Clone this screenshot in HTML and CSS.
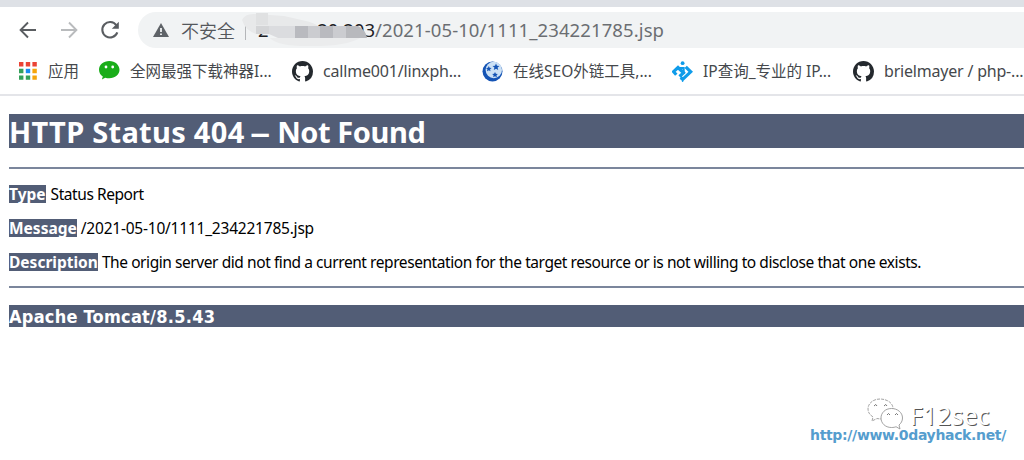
FILE: index.html
```html
<!DOCTYPE html>
<html lang="zh-CN">
<head>
<meta charset="utf-8">
<title>HTTP Status 404 – Not Found</title>
<link rel="stylesheet" href="styles.css">
</head>
<body>
<svg class="defs" width="0" height="0">
  <symbol id="github" viewBox="0 0 16 16"><path fill="#24292e" d="M8 0C3.58 0 0 3.58 0 8c0 3.54 2.29 6.53 5.47 7.59.4.07.55-.17.55-.38 0-.19-.01-.82-.01-1.49-2.01.37-2.53-.49-2.69-.94-.09-.23-.48-.94-.82-1.13-.28-.15-.68-.52-.01-.53.63-.01 1.08.58 1.23.82.72 1.21 1.87.87 2.33.66.07-.52.28-.87.51-1.07-1.78-.2-3.64-.89-3.64-3.95 0-.87.31-1.59.82-2.15-.08-.2-.36-1.02.08-2.12 0 0 .67-.21 2.2.82.64-.18 1.32-.27 2-.27s1.36.09 2 .27c1.53-1.04 2.2-.82 2.2-.82.44 1.1.16 1.92.08 2.12.51.56.82 1.27.82 2.15 0 3.07-1.87 3.75-3.65 3.95.29.25.54.73.54 1.48 0 1.07-.01 1.93-.01 2.2 0 .21.15.46.55.38A8.01 8.01 0 0 0 16 8c0-4.42-3.58-8-8-8z"/></symbol>
</svg>
<div class="tabstrip"></div>
<header class="toolbar">
  <svg class="nav-icon" viewBox="0 0 20 20" fill="none" stroke="#5a5d61" stroke-width="1.9"><path d="M18 10H3M10 2.500 2.600 10l7.400 7.500"/></svg>
  <svg class="nav-icon" viewBox="0 0 20 20" fill="none" stroke="#b9bbbd" stroke-width="1.9"><path d="M2 10h15M10 2.500l7.400 7.500-7.400 7.500"/></svg>
  <svg class="nav-icon" viewBox="0 0 20 20"><path d="M16.300 5.200A7.700 7.700 0 1 0 17.300 12.300" fill="none" stroke="#5a5d61" stroke-width="2.1"/><path d="M18.800 1.800v7h-7z" fill="#5a5d61"/></svg>
  <div class="omnibox">
    <svg class="warn" viewBox="0 0 16 14"><path d="M8 0l8 14H0z" fill="#5f6368"/><path d="M7.100 5h1.800v4H7.100zM7.100 10.400h1.800v1.700H7.100z" fill="#f1f3f4"/></svg>
    <span class="unsafe">不安全</span>
    <span class="divider"></span>
    <span class="host"><span class="host-start">2</span><span class="host-end">20.203</span>
      <svg class="mosaic" width="132" height="42" viewBox="0 0 132 42">
        <path d="M0 8q3-7 14-6l28 2 22 5q8 2 12 5H28v8H14Q3 18 0 8z" fill="#e8e9ea"/>
        <path d="M14 1h12v12H14z" fill="#e0e1e2"/>
        <path d="M14 14h14v8H14z" fill="#d4d5d7"/>
        <path d="M27 14h26v12H36l-9-4z" fill="#dbdcdf"/>
        <path d="M53 14h13v12H53zM78 14h13v12H78z" fill="#b9babf"/>
        <path d="M66 14h12v12H66zM91 14h13v12H91z" fill="#cbccd0"/>
        <path d="M104 14h12q8 4 9 12h-21z" fill="#b8b9bd"/>
        <path d="M28 26h90q-14 8-46 8-36 1-44-8z" fill="#ebeced"/>
      </svg>
    </span>
    <span class="path">/2021-05-10/1111_234221785.jsp</span>
  </div>
</header>
<nav class="bookmarks">
  <a class="bm b1"><svg width="18" height="18" viewBox="0 0 18 18"><path fill="#ea4335" d="M0 0h4.400v4.400H0zM6.800 0h4.400v4.400H6.800zM13.400 0h4.400v4.400h-4.400z"/><path fill="#34a05a" d="M0 6.800h4.400v4.400H0zM0 13.400h4.400v4.400H0zM6.800 13.400h4.400v4.400H6.800z"/><path fill="#1a8cf0" d="M6.800 6.800h4.400v4.400H6.800z"/><path fill="#f5a50b" d="M13.400 6.800h4.400v4.400h-4.400zM13.400 13.400h4.400v4.400h-4.400z"/></svg><span>应用</span></a>
  <a class="bm b2"><svg width="21" height="20" viewBox="0 0 21 20"><path fill="#1aad19" d="M10.300 0C4.400 0 0 3.800 0 8.800c0 2.900 1.500 5.200 3.800 6.800l-.9 3 3.300-1.800c1.300.4 2.600.5 4.100.5 5.800 0 10.200-3.700 10.200-8.500S16.100 0 10.300 0z"/><circle cx="7" cy="6" r="1.400" fill="#fff"/><circle cx="13.700" cy="6" r="1.400" fill="#fff"/></svg><span>全网最强下载神器I...</span></a>
  <a class="bm b3"><svg width="21" height="21"><use href="#github"/></svg><span>callme001/linxph...</span></a>
  <a class="bm b4"><svg width="21" height="21" viewBox="0 0 21 21"><circle cx="10.500" cy="10.500" r="10" fill="#1554b5"/><circle cx="11.800" cy="9" r="8.200" fill="#cce1f5"/><path fill="#1554b5" d="m14 2.500 1 2.200 2.500.2-1.900 1.600.6 2.500-2.200-1.300-2.200 1.300.6-2.500-1.900-1.600 2.500-.2zM6.800 5l.8 1.700 2 .2-1.500 1.400.4 2-1.700-1-1.800 1 .4-2-1.400-1.400 2-.2zM13 11l.9 1.700 2 .2-1.400 1.400.4 2-1.900-1-1.800 1 .4-2-1.500-1.400 2-.2z"/></svg><span>在线SEO外链工具,...</span></a>
  <a class="bm b5"><svg width="21" height="21" viewBox="0 0 21 21" fill="none" stroke="#0f9cea" stroke-width="3.200"><path d="M4.300 13.800 1.600 10.700 6 6.500 11.500 11.800 7.500 15.500M13.700 5.800l5 5-8 7.500-2-1.800"/><path d="M8 7h3.600v6"  stroke-width="2.200"/><circle cx="10.600" cy="2.200" r="1.900" fill="#0f9cea" stroke="none"/><circle cx="10.600" cy="20.200" r=".8" fill="#0f9cea" stroke="none"/></svg><span>IP查询_专业的 IP...</span></a>
  <a class="bm b6"><svg width="21" height="21"><use href="#github"/></svg><span>brielmayer / php-...</span></a>
</nav>
<main class="page">
  <h1><span class="lead">HTTP Status 404</span> <span class="dash">–</span> <span class="tail">Not Found</span></h1>
  <hr>
  <p><b class="k1">Type</b> <span class="v1">Status Report</span></p>
  <p><b class="k2">Message</b> <span class="v2">/2021-05-10/1111_234221785.jsp</span></p>
  <p><b class="k3">Description</b> <span class="v3">The origin server did not find a current representation for the target resource or is not willing to disclose that one exists.</span></p>
  <hr>
  <h3>Apache Tomcat/8.5.43</h3>
</main>
<div class="watermark">
  <div class="brand">
    <svg width="38" height="32" viewBox="0 0 38 32" fill="#fff" stroke="#8c8c8c" stroke-width=".8"><path stroke-dasharray="3 1" d="M14 1C7 1 2 5.500 2 11c0 3.500 2 6 5 8l-1 4 5-2.500c9 2 16-3 16-10C27 5 21 1 14 1z"/><path d="M25.500 10.500C19 10.500 15 15 15 20s4 9.500 10.500 9.500c2 0 3.500-.3 4.500-.8l4 2.300-1-4c2-1.700 3.500-4 3.500-7 0-5.500-5-9.500-11-9.500z"/><path d="M8 8q2-3 3 0M18 8q2-3 3 0M21 17q1.500-3 3 0M29 17q1.500-3 3 0" fill="none" stroke="#555"/></svg>
    <span>F12sec</span>
  </div>
  <div class="site">http://www.0dayhack.net/</div>
</div>
</body>
</html>
```
FILE: styles.css
```css
* { box-sizing: border-box; }
body {
  margin: 0;
  width: 1024px;
  height: 460px;
  overflow: hidden;
  position: relative;
  background: #fff;
  color: #000;
  font-family: "Noto Sans", sans-serif;
}
.defs { display: block; }
.tabstrip { height: 7px; background: #dee1e6; }
.toolbar {
  display: flex;
  align-items: center;
  height: 41px;
  padding: 5px 0 0 18px;
  gap: 21px;
}
.nav-icon { width: 20px; height: 20px; flex: none; }
.omnibox {
  display: flex;
  align-items: center;
  flex: none;
  width: 920px;
  height: 36px;
  margin-left: -3px;
  padding-left: 15px;
  border-radius: 18px;
  background: #f1f3f4;
  color: #6b6e72;
  font-family: "Noto Sans", "Noto Sans CJK SC", sans-serif;
  font-size: 18.500px;
  line-height: 36px;
  white-space: nowrap;
}
.warn { width: 16px; height: 14px; }
.unsafe { width: 54px; margin-left: 12px; font-family: "Noto Sans CJK SC", sans-serif; font-size: 18px; font-weight: 350; color: #55585c; }
.divider { width: 1px; height: 19px; margin-left: 10px; background: #b4b6b9; }
.host { position: relative; display: flex; justify-content: space-between; width: 117px; margin-left: 12px; color: #202124; }
.mosaic { position: absolute; left: -16px; top: 0; }
.path { letter-spacing: .1px; }
.bookmarks {
  display: flex;
  align-items: center;
  height: 48px;
  border-bottom: 2px solid #e4e5e9;
  padding-left: 19px;
  font-family: "Noto Sans", "Noto Sans CJK SC", sans-serif;
  font-size: 16px;
  color: #45484c;
  white-space: nowrap;
}
.bm { display: flex; align-items: center; flex: none; gap: 10px; line-height: 24px; }
.bm svg { flex: none; }
.b1 { width: 80px; gap: 11px; }
.b2 { width: 193px; }
.b3 { width: 190px; letter-spacing: -.18px; }
.b4 { width: 190px; }
.b5 { width: 181px; }
.b6 { letter-spacing: -.2px; }
.b1, .b2, .b4, .b5 { font-size: 15.500px; }
.page { padding: 18px 0 0 9px; }
.page h1, .page h3 { margin: 0; background: #525d76; color: #fff; white-space: nowrap; }
.page h1 { height: 34px; font-size: 29px; line-height: 36px; }
.lead { letter-spacing: .3px; }
.dash { display: inline-block; margin: 0 2px 0 1px; transform: scaleX(1.4); }
.tail { letter-spacing: -.4px; }
.page hr { height: 2px; margin: 19px 0 0; border: 0; background: #7b869c; }
.page p { height: 18px; margin: 16px 0 0; font-size: 15.500px; line-height: 18px; white-space: nowrap; }
.page b { display: inline-block; height: 18px; background: #525d76; color: #fff; }
.v1, .v3 { letter-spacing: -.43px; }
.v1 { margin-left: 1px; }
.v2 { letter-spacing: -.22px; }
.page p + hr { margin-top: 15px; }
.page h3 {
  height: 22px;
  margin-top: 17px;
  font: bold 18px/23px "DejaVu Sans Condensed", "DejaVu Sans", sans-serif;
  font-stretch: condensed;
  letter-spacing: .26px;
}
.watermark { position: absolute; left: 810px; top: 401px; width: 214px; }
.brand { display: flex; align-items: center; height: 26px; padding-left: 56px; gap: 6px; font: 24.500px/20px "Noto Sans", sans-serif; color: #fff; text-shadow: 1px 1px 0 #555; }
.brand span { padding-top: 4px; letter-spacing: .3px; }
.site { color: #559dce; font: bold 14px/16px "DejaVu Sans", sans-serif; letter-spacing: -.33px; white-space: nowrap; }
```
